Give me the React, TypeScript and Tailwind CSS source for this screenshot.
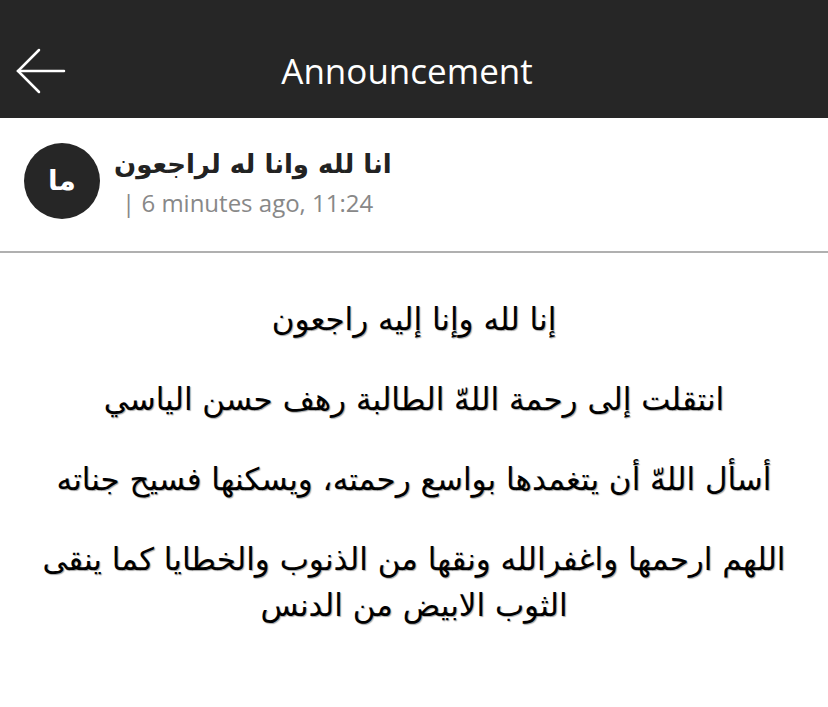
export default function App() {
  const paragraphs = [
    'إنا لله وإنا إليه راجعون',
    'انتقلت إلى رحمة اللهّ الطالبة رهف حسن الياسي',
    'أسأل اللهّ أن يتغمدها بواسع رحمته، ويسكنها فسيح جناته',
    'اللهم ارحمها واغفرالله ونقها من الذنوب والخطايا كما ينقى الثوب الابيض من الدنس',
  ];

  return (
    <div className="min-h-[707px] w-[828px] bg-white font-['Open_Sans',sans-serif]">
      {/* Top bar */}
      <header className="relative flex h-[118px] items-center justify-center bg-[#262626] pt-[22px] text-white">
        <button className="absolute left-[14px] top-[48px] h-[46px] w-[52px]">
          <svg viewBox="0 0 52 46" className="h-full w-full" fill="none" stroke="white" strokeWidth="2.5" strokeLinecap="round">
            <path d="M50 23H4" />
            <path d="M25 2L4 23L25 44" />
          </svg>
        </button>
        <h1 className="mr-[14px] text-[35px] font-normal leading-none [font-stretch:90%]">Announcement</h1>
      </header>

      {/* Author row */}
      <div className="flex items-center gap-[14px] border-b-2 border-[#b0b0b0] px-[24px] pt-[25px] pb-[32px]">
        <div className="flex h-[76px] w-[76px] shrink-0 items-center justify-center rounded-full bg-[#262626] text-white">
          <span className="font-['DejaVu_Sans',sans-serif] text-[28px] font-bold" dir="rtl">ما</span>
        </div>
        <div className="flex flex-col">
          <span className="font-['DejaVu_Sans',sans-serif] text-[26px] font-bold leading-[36px] text-[#222]" dir="rtl">
            انا لله وانا له لراجعون
          </span>
          <span className="mt-[7px] pl-[8px] text-[24px] leading-[28px] text-[#888] [font-stretch:88%]">| 6 minutes ago, 11:24</span>
        </div>
      </div>

      {/* Body */}
      <div className="flex flex-col items-center gap-[34px] px-[40px] pt-[43px] text-center font-['DejaVu_Sans',sans-serif] text-[31px] leading-[46px] text-black" dir="rtl">
        {paragraphs.map((p) => (
          <p key={p} className="[text-shadow:1px_1px_1px_rgba(0,0,0,0.35)]">{p}</p>
        ))}
      </div>
    </div>
  );
}
